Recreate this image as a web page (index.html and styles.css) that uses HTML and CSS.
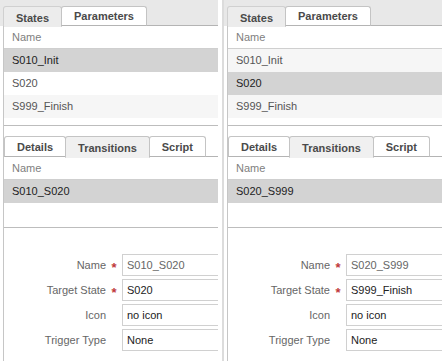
FILE: index.html
```html
<!DOCTYPE html>
<html>
<head>
<meta charset="utf-8">
<link rel="stylesheet" href="styles.css">
</head>
<body>
<div class="app">
  <section class="panel">
    <div class="tabbar top">
      <div class="tab active">States</div>
      <div class="tab">Parameters</div>
      <div class="fill"></div>
    </div>
    <div class="page">
      <div class="list states">
        <div class="lhead">Name</div>
        <div class="row sel">S010_Init</div>
        <div class="row">S020</div>
        <div class="row alt">S999_Finish</div>
      </div>
      <div class="tabbar sub">
        <div class="tab">Details</div>
        <div class="tab active">Transitions</div>
        <div class="tab">Script</div>
        <div class="fill"></div>
      </div>
      <div class="list trans">
        <div class="lhead">Name</div>
        <div class="row sel">S010_S020</div>
      </div>
      <div class="form">
        <label class="lbl">Name</label><span class="req">*</span><div class="inp muted">S010_S020</div>
        <label class="lbl">Target State</label><span class="req">*</span><div class="inp">S020</div>
        <label class="lbl">Icon</label><span></span><div class="inp">no icon</div>
        <label class="lbl">Trigger Type</label><span></span><div class="inp">None</div>
      </div>
    </div>
  </section>
  <div class="splitter"></div>
  <section class="panel">
    <div class="tabbar top">
      <div class="tab active">States</div>
      <div class="tab">Parameters</div>
      <div class="fill"></div>
    </div>
    <div class="page">
      <div class="list states">
        <div class="lhead">Name</div>
        <div class="row alt">S010_Init</div>
        <div class="row sel">S020</div>
        <div class="row alt">S999_Finish</div>
      </div>
      <div class="tabbar sub">
        <div class="tab">Details</div>
        <div class="tab active">Transitions</div>
        <div class="tab">Script</div>
        <div class="fill"></div>
      </div>
      <div class="list trans">
        <div class="lhead">Name</div>
        <div class="row sel">S020_S999</div>
      </div>
      <div class="form">
        <label class="lbl">Name</label><span class="req">*</span><div class="inp muted">S020_S999</div>
        <label class="lbl">Target State</label><span class="req">*</span><div class="inp">S999_Finish</div>
        <label class="lbl">Icon</label><span></span><div class="inp">no icon</div>
        <label class="lbl">Trigger Type</label><span></span><div class="inp">None</div>
      </div>
    </div>
  </section>
</div>
</body>
</html>
```

FILE: styles.css
```css
html, body {
  margin: 0;
  padding: 0;
  background: #ffffff;
  font-family: "Liberation Sans", Arial, sans-serif;
  font-size: 11px;
  color: #333;
}
.app {
  display: flex;
  width: 442px;
  height: 361px;
  overflow: hidden;
}
.panel {
  flex: 0 0 218px;
  width: 218px;
  overflow: hidden;
  display: flex;
  flex-direction: column;
}
.panel + .splitter + .panel {
  flex: 0 0 224px;
  width: 224px;
}
.splitter {
  flex: 0 0 4px;
  border-right: 2px solid #dcdcdc;
}
.tabbar {
  display: flex;
  align-items: flex-end;
}
.tabbar .fill {
  flex: 1;
  align-self: stretch;
  border-bottom: 1px solid #b4b4b4;
}
.tabbar.top {
  background: #e8e8e8;
  height: 26px;
  padding-left: 3px;
}
.tabbar.top .tab {
  height: 20px;
}
.tab {
  box-sizing: border-box;
  height: 21px;
  padding: 0 12px;
  font-weight: bold;
  color: #4a4a4a;
  background: #fff;
  border: 1px solid #c4c4c4;
  border-bottom-color: #b4b4b4;
  border-radius: 3px 3px 0 0;
  display: flex;
  align-items: center;
  margin-left: -1px;
}
.tab:first-child { margin-left: 0; }
.tab.active {
  background: #f0f0f0;
  border-bottom-color: transparent;
  padding-top: 2px;
}
.tabbar.top .tab.active {
  background: #ececec;
  border-color: #d0d0d0;
  border-bottom: none;
  height: 21px;
  margin-bottom: -1px;
}
.page {
  flex: 1;
  margin-left: 3px;
  border-left: 1px solid #c6c6c6;
  display: flex;
  flex-direction: column;
}
.list {
  border-bottom: 1px solid #bdbdbd;
}
.list.states { height: 99px; }
.list.trans { height: 70px; }
.lhead {
  height: 22px;
  line-height: 22px;
  padding-left: 8px;
  color: #808080;
  border-bottom: 1px solid #cfcfcf;
}
.row {
  height: 23px;
  line-height: 23px;
  padding-left: 8px;
  color: #555;
}
.row.alt { background: #f6f6f6; }
.row.sel { background: #d3d3d3; color: #222; }
.tabbar.sub {
  margin-top: 10px;
  height: 21px;
}
.tabbar.sub .tab.active {
  height: 22px;
  margin-bottom: -1px;
}
.form {
  margin-top: 26px;
  display: grid;
  grid-template-columns: 102px 16px 1fr;
  grid-auto-rows: 22px;
  row-gap: 3px;
  align-items: center;
}
.lbl {
  text-align: right;
  color: #666;
}
.req {
  color: #c0393b;
  font-size: 13px;
  font-weight: bold;
  text-align: center;
  line-height: 22px;
  height: 22px;
  padding-top: 3px;
  box-sizing: border-box;
}
.inp {
  box-sizing: border-box;
  height: 22px;
  width: 140px;
  border: 1px solid #d0d0d0;
  padding-left: 4px;
  line-height: 20px;
  color: #222;
  background: #fff;
}
.inp.muted { color: #666; }
```
